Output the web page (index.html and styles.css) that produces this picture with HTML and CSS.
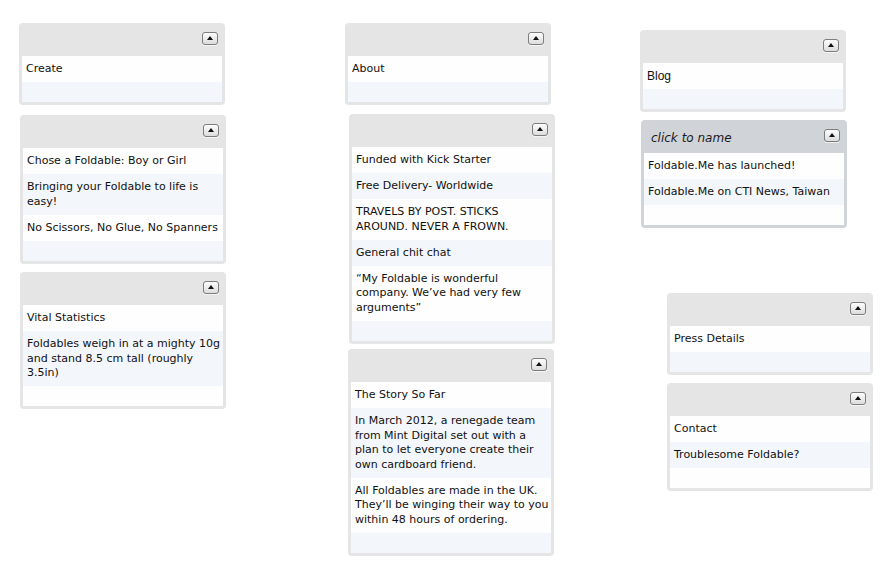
FILE: index.html
```html
<!DOCTYPE html>
<html>
<head>
<meta charset="utf-8">
<title>Foldable.Me</title>
<link rel="stylesheet" href="styles.css">
</head>
<body>
<div class="desk">
  <section class="panel p-create">
    <header class="head"><button class="tog" aria-label="collapse"></button></header>
    <ul class="rows"><li>Create</li><li class="blank"></li></ul>
  </section>
  <section class="panel p-choose">
    <header class="head"><button class="tog" aria-label="collapse"></button></header>
    <ul class="rows">
      <li>Chose a Foldable: Boy or Girl</li>
      <li>Bringing your Foldable to life is easy!</li>
      <li>No Scissors, No Glue, No Spanners</li>
      <li class="blank"></li>
    </ul>
  </section>
  <section class="panel p-stats">
    <header class="head"><button class="tog" aria-label="collapse"></button></header>
    <ul class="rows">
      <li>Vital Statistics</li>
      <li>Foldables weigh in at a mighty 10g and stand 8.5 cm tall (roughly 3.5in)</li>
      <li class="blank"></li>
    </ul>
  </section>

  <section class="panel p-about">
    <header class="head"><button class="tog" aria-label="collapse"></button></header>
    <ul class="rows"><li>About</li><li class="blank"></li></ul>
  </section>
  <section class="panel p-funded">
    <header class="head"><button class="tog" aria-label="collapse"></button></header>
    <ul class="rows">
      <li>Funded with Kick Starter</li>
      <li>Free Delivery- Worldwide</li>
      <li>TRAVELS BY POST. STICKS AROUND. NEVER A FROWN.</li>
      <li>General chit chat</li>
      <li>“My Foldable is wonderful company. We’ve had very few arguments”</li>
      <li class="blank"></li>
    </ul>
  </section>
  <section class="panel p-story">
    <header class="head"><button class="tog" aria-label="collapse"></button></header>
    <ul class="rows">
      <li>The Story So Far</li>
      <li>In March 2012, a renegade team from Mint Digital set out with a plan to let everyone create their own cardboard friend.</li>
      <li>All Foldables are made in the UK. They’ll be winging their way to you within 48 hours of ordering.</li>
      <li class="blank"></li>
    </ul>
  </section>

  <section class="panel p-blog">
    <header class="head"><button class="tog" aria-label="collapse"></button></header>
    <ul class="rows"><li class="sans">Blog</li><li class="blank"></li></ul>
  </section>
  <section class="panel p-news named">
    <header class="head"><span class="name">click to name</span><button class="tog" aria-label="collapse"></button></header>
    <ul class="rows">
      <li>Foldable.Me has launched!</li>
      <li>Foldable.Me on CTI News, Taiwan</li>
      <li class="blank"></li>
    </ul>
  </section>
  <section class="panel p-press">
    <header class="head"><button class="tog" aria-label="collapse"></button></header>
    <ul class="rows"><li>Press Details</li><li class="blank"></li></ul>
  </section>
  <section class="panel p-contact">
    <header class="head"><button class="tog" aria-label="collapse"></button></header>
    <ul class="rows">
      <li>Contact</li>
      <li>Troublesome Foldable?</li>
      <li class="blank"></li>
    </ul>
  </section>
</div>
</body>
</html>
```
FILE: styles.css
```css
html, body {
  margin: 0;
  padding: 0;
  background: #ffffff;
}
.desk {
  position: relative;
  width: 886px;
  height: 578px;
  font-family: "DejaVu Sans", Verdana, sans-serif;
  font-size: 11px;
  color: #111111;
}
.panel {
  position: absolute;
  width: 200px;
  padding: 0 3px 3px;
  background: #e5e5e5;
  border-radius: 4px;
}
.p-create { left: 19px; top: 23px; }
.p-choose { left: 20px; top: 115px; }
.p-stats { left: 20px; top: 272px; }
.p-about { left: 345px; top: 23px; }
.p-funded { left: 349px; top: 114px; }
.p-story { left: 348px; top: 349px; }
.p-blog { left: 640px; top: 30px; }
.p-news { left: 641px; top: 120px; }
.p-press { left: 667px; top: 293px; }
.p-contact { left: 667px; top: 383px; }

.named { background: #d0d4d8; }

.head {
  height: 33px;
  display: flex;
  align-items: flex-start;
  justify-content: flex-end;
}
.name {
  flex: 1;
  margin: 10px 0 0 7px;
  font-style: italic;
  font-size: 12px;
  line-height: 16px;
  color: #1a1a1a;
}
.tog {
  position: relative;
  margin: 9px 4px 0 0;
  width: 16px;
  height: 13px;
  padding: 0;
  border: 1px solid #7d7d7d;
  border-radius: 3px;
  background: linear-gradient(#fdfdfd, #dcdcdc);
  box-shadow: 0 1px 0 rgba(255,255,255,0.6);
}
.tog::after {
  content: "";
  position: absolute;
  left: 4px;
  top: 3px;
  width: 0;
  height: 0;
  border-left: 3px solid transparent;
  border-right: 3px solid transparent;
  border-bottom: 4px solid #111;
}
.rows {
  list-style: none;
  margin: 0;
  padding: 0;
}
.rows li {
  padding: 6px 0 5.5px 4px;
  line-height: 14.5px;
  background: #fefefe;
}
.rows li:nth-child(even) {
  background: #f3f6fb;
}
.rows li.blank {
  height: 20px;
  padding: 0;
}
.rows li.sans {
  font-family: "Liberation Sans", Arial, sans-serif;
  font-size: 12px;
}
```
